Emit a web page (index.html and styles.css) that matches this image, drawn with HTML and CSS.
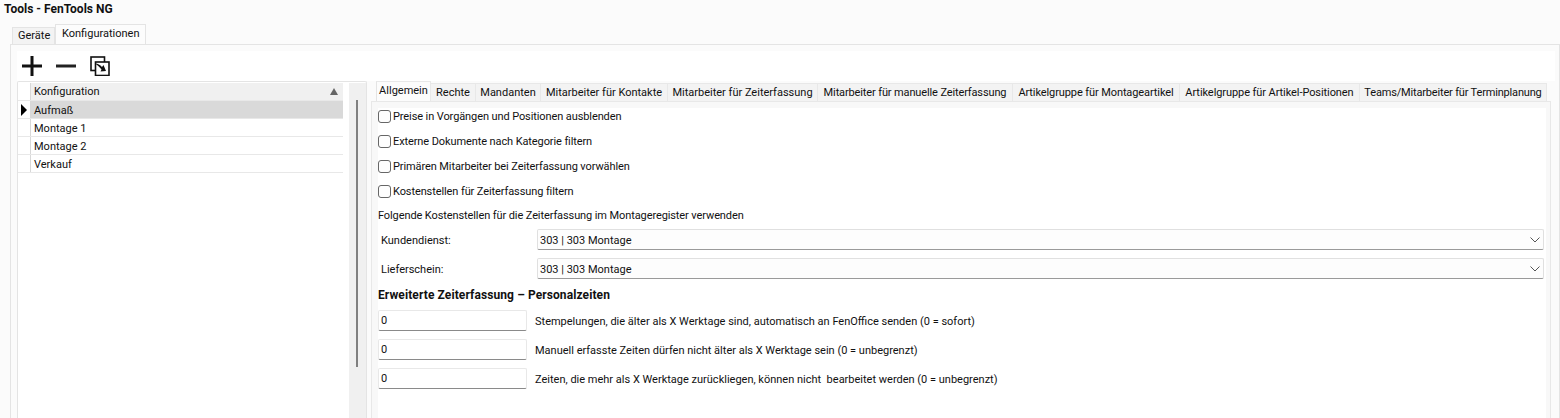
FILE: index.html
```html
<!DOCTYPE html>
<html lang="de">
<head>
<meta charset="utf-8">
<title>Tools - FenTools NG</title>
<link rel="stylesheet" href="styles.css">
</head>
<body>
<div class="app">
  <div class="title">Tools - FenTools NG</div>
  <div class="outer-tabs">
    <div class="tab">Geräte</div>
    <div class="tab active">Konfigurationen</div>
  </div>
  <div class="outer-pane">
    <div class="toolbar">
      <svg class="tool" width="20" height="20" viewBox="0 0 20 20"><path d="M10 0v20M0 10h20" stroke="#111" stroke-width="3" fill="none"/></svg>
      <svg class="tool" width="20" height="20" viewBox="0 0 20 20"><path d="M0 10h20" stroke="#222" stroke-width="3" fill="none"/></svg>
      <svg class="tool" width="20" height="20" viewBox="0 0 20 20"><rect x="1" y="1" width="13.500" height="13.500" fill="#fff" stroke="#111" stroke-width="1.600"/><rect x="5.500" y="6" width="13.500" height="13.500" fill="#fff" stroke="#111" stroke-width="1.600"/><path d="M5 7.500c3 0 5 1.500 7 3.500l1.500-2 2.500 6-5.500.5 1-2C10 11.500 8 9.500 5 7.500z" fill="#111"/></svg>
    </div>
    <div class="split">
      <div class="frame">
        <div class="grid">
          <div class="grid-row head"><div class="rh"></div><div class="cell">Konfiguration<span class="sort"></span></div></div>
          <div class="grid-row sel"><div class="rh"><span class="arrow"></span></div><div class="cell">Aufmaß</div></div>
          <div class="grid-row"><div class="rh"></div><div class="cell">Montage 1</div></div>
          <div class="grid-row"><div class="rh"></div><div class="cell">Montage 2</div></div>
          <div class="grid-row"><div class="rh"></div><div class="cell">Verkauf</div></div>
        </div>
        <div class="splitter"><div class="thumb"></div></div>
      </div>
      <div class="right">
        <div class="inner-tabs">
          <div class="itab active">Allgemein</div>
          <div class="itab t-rechte">Rechte</div>
          <div class="itab t-mandanten">Mandanten</div>
          <div class="itab t-kontakte">Mitarbeiter für Kontakte</div>
          <div class="itab t-zeit">Mitarbeiter für Zeiterfassung</div>
          <div class="itab t-manuell">Mitarbeiter für manuelle Zeiterfassung</div>
          <div class="itab t-montage">Artikelgruppe für Montageartikel</div>
          <div class="itab t-position">Artikelgruppe für Artikel-Positionen</div>
          <div class="itab t-teams">Teams/Mitarbeiter für Terminplanung</div>
        </div>
        <div class="inner-pane">
          <div class="content">
            <label class="check"><span class="box"></span>Preise in Vorgängen und Positionen ausblenden</label>
            <label class="check"><span class="box"></span>Externe Dokumente nach Kategorie filtern</label>
            <label class="check"><span class="box"></span>Primären Mitarbeiter bei Zeiterfassung vorwählen</label>
            <label class="check"><span class="box"></span>Kostenstellen für Zeiterfassung filtern</label>
            <div class="note">Folgende Kostenstellen für die Zeiterfassung im Montageregister verwenden</div>
            <div class="combo-row"><span class="combo-label">Kundendienst:</span><div class="combo">303 | 303 Montage<svg class="chev" width="10" height="6" viewBox="0 0 10 6"><path d="M.5.5 5 5 9.500.5" fill="none" stroke="#555"/></svg></div></div>
            <div class="combo-row"><span class="combo-label">Lieferschein:</span><div class="combo">303 | 303 Montage<svg class="chev" width="10" height="6" viewBox="0 0 10 6"><path d="M.5.5 5 5 9.500.5" fill="none" stroke="#555"/></svg></div></div>
            <div class="section">Erweiterte Zeiterfassung – Personalzeiten</div>
            <div class="num-row"><div class="num">0</div><span>Stempelungen, die älter als X Werktage sind, automatisch an FenOffice senden (0 = sofort)</span></div>
            <div class="num-row"><div class="num">0</div><span>Manuell erfasste Zeiten dürfen nicht älter als X Werktage sein (0 = unbegrenzt)</span></div>
            <div class="num-row"><div class="num">0</div><span>Zeiten, die mehr als X Werktage zurückliegen, können nicht &nbsp;bearbeitet werden (0 = unbegrenzt)</span></div>
          </div>
        </div>
      </div>
    </div>
  </div>
</div>
</body>
</html>
```
FILE: styles.css
```css
* { box-sizing: border-box; }
html, body { margin: 0; padding: 0; }
body { font: 11px/16px Roboto, "Open Sans", sans-serif; color: #111; background: #fbfbfb; overflow: hidden; }
.app { width: 1560px; height: 418px; display: flex; flex-direction: column; overflow: hidden; }
.title { height: 24px; padding: 1px 0 0 4px; font-weight: 700; font-size: 12px; }
.outer-tabs { display: flex; height: 20px; padding-left: 12px; align-items: flex-end; }
.tab { height: 17px; width: 43px; padding-left: 5px; border: 1px solid #e4e4e4; border-bottom: 0; background: #f3f3f3; line-height: 16px; }
.tab.active { height: 20px; width: 91px; background: #fcfcfc; padding-left: 6px; line-height: 17px; }
.outer-pane { flex: 1; margin-left: 10px; border: 1px solid #e4e4e4; border-bottom: 0; padding: 6px 4px 0 6px; display: flex; flex-direction: column; min-height: 0; }
.toolbar { height: 30px; flex: none; background: #fff; display: flex; align-items: center; gap: 14px; padding-left: 5px; }
.split { flex: 1; display: flex; min-height: 0; }
.frame { width: 350px; flex: none; display: flex; padding-top: 1px; border: 1px solid #e4e4e4; border-bottom: 0; border-radius: 2px 2px 0 0; background: #fff; }
.grid { width: 331px; flex: none; }
.grid-row { display: flex; width: 325px; height: 18px; border-bottom: 1px solid #e8e8e8; }
.rh { width: 13px; flex: none; border-right: 1px solid #d8d8d8; display: flex; align-items: center; padding-left: 3px; }
.arrow { width: 0; height: 0; border-left: 6px solid #000; border-top: 6px solid transparent; border-bottom: 6px solid transparent; }
.cell { flex: 1; padding: 2px 0 0 3px; display: flex; justify-content: space-between; align-items: center; }
.head .cell { background: #f0f0f0; padding: 0 5px 0 3px; }
.sort { width: 0; height: 0; border-left: 4px solid transparent; border-right: 4px solid transparent; border-bottom: 7px solid #666; }
.sel .cell { background: #d9d9d9; }
.splitter { flex: 1; background: #f0f0f0; padding: 17px 0 0 7px; }
.thumb { width: 2px; height: 267px; background: #808080; }
.right { flex: 1; min-width: 0; display: flex; flex-direction: column; padding-left: 4px; }
.inner-tabs { display: flex; height: 20px; flex: none; padding-left: 5px; align-items: flex-end; }
.itab { height: 18px; flex: none; border: 1px solid #e8e8e8; border-left: 0; border-bottom: 0; background: #f3f3f3; text-align: center; line-height: 18px; white-space: nowrap; }
.itab.active { height: 20px; width: 55px; border-left: 1px solid #e4e4e4; background: #fcfcfc; line-height: 18px; }
.t-rechte { width: 45px; } .t-mandanten { width: 65px; } .t-kontakte { width: 127px; } .t-zeit { width: 150px; }
.t-manuell { width: 195px; letter-spacing: -0.13px; }
.t-montage { width: 167px; letter-spacing: -0.1px; }
.t-position { width: 180px; letter-spacing: -0.08px; }
.t-teams { width: 187px; letter-spacing: -0.17px; }
.inner-pane { flex: 1; border: 1px solid #e8e8e8; border-bottom: 0; margin-right: 4px; padding: 6px 4px 0 6px; min-height: 0; background: #f8f8f8; }
.content { height: 100%; background: #fff; }
.check { display: flex; align-items: center; height: 17px; margin-bottom: 8px; gap: 2px; letter-spacing: -0.1px; }
.box { width: 13px; height: 13px; border: 1px solid #666; border-radius: 3px; background: #fdfdfd; }
.note { height: 15px; line-height: 15px; margin-bottom: 6px; letter-spacing: -0.1px; }
.combo-row { display: flex; align-items: center; height: 21px; margin-bottom: 8px; padding-right: 2px; }
.combo-row + .section { margin-top: -8px; }
.combo-label { width: 159px; padding: 2px 0 0 3px; }
.combo { flex: 1; height: 21px; border: 1px solid #e0e0e0; border-bottom-color: #9a9a9a; border-radius: 2px; background: #fdfdfd; padding: 2px 0 0 2px; display: flex; justify-content: space-between; align-items: center; }
.chev { margin: 0 3px 2px 0; }
.section { font-weight: 700; font-size: 12px; letter-spacing: 0.1px; height: 31px; line-height: 32px; }
.num-row { display: flex; align-items: center; height: 21px; margin-bottom: 8px; }
.num { width: 149px; height: 21px; border: 1px solid #e8e8e8; border-bottom-color: #8a8a8a; border-radius: 2px; background: #fff; padding-left: 2px; line-height: 19px; }
.num-row span { margin-left: 8px; padding-top: 2px; }
```
